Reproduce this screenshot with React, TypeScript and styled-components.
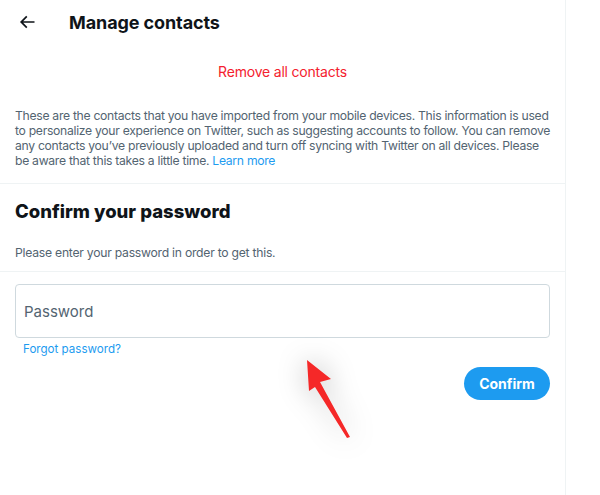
import React from 'react';
import styled, {createGlobalStyle} from "styled-components";

const GlobalStyle = createGlobalStyle`
    html, body {
        margin: 0;
        padding: 0;
        background: #fff;
    }
    body {
        font-family: Inter, "Noto Sans", "Liberation Sans", sans-serif;
        color: #0f1419;
    }
`

function BackArrow() {
    return (
        <svg width="20" height="20" viewBox="0 0 24 24" aria-hidden="true">
            <path
                fill="#0f1419"
                d="M7.414 13l5.043 5.04-1.414 1.42L3.586 12l7.457-7.46 1.414 1.42L7.414 11H21v2H7.414z"
            />
        </svg>
    );
}

function RedArrow() {
    return (
        <ArrowMark width="80" height="110" viewBox="0 0 80 110">
            <path
                fill="#f52828"
                d="M9 2 L33 21 L22 24 L52 79 L49 80 L17 29 L11 33 Z"
            />
        </ArrowMark>
    );
}

const descriptionLines = [
    "These are the contacts that you have imported from your mobile devices. This information is used",
    "to personalize your experience on Twitter, such as suggesting accounts to follow. You can remove",
    "any contacts you’ve previously uploaded and turn off syncing with Twitter on all devices. Please",
];

function App() {
    return (
        <>
            <GlobalStyle/>
            <Page>
                <Column>
                    <Header>
                        <BackButton><BackArrow/></BackButton>
                        <Title>Manage contacts</Title>
                    </Header>
                    <RemoveRow>
                        <DangerLink>Remove all contacts</DangerLink>
                    </RemoveRow>
                    <Description>
                        {descriptionLines.map((line) => (
                            <Line key={line}>{line}</Line>
                        ))}
                        <Line>be aware that this takes a little time. <Link>Learn more</Link></Line>
                    </Description>
                    <Section>
                        <SectionTitle>Confirm your password</SectionTitle>
                        <Hint>Please enter your password in order to get this.</Hint>
                    </Section>
                    <Form>
                        <InputBox>
                            <Placeholder>Password</Placeholder>
                        </InputBox>
                        <SmallLink>Forgot password?</SmallLink>
                        <Actions>
                            <PrimaryButton>Confirm</PrimaryButton>
                        </Actions>
                    </Form>
                    <RedArrow/>
                </Column>
            </Page>
        </>
    );
}

const Page = styled.div`
    display: flex;
    width: 600px;
    height: 495px;
    overflow: hidden;
`
const Column = styled.div`
    position: relative;
    width: 566px;
    min-height: 495px;
    border-right: 1px solid #eff3f4;
    box-sizing: border-box;
    display: flex;
    flex-direction: column;
`
const Header = styled.div`
    display: flex;
    align-items: center;
    height: 44px;
    padding: 0 16px 0 15px;
`
const BackButton = styled.div`
    display: flex;
    align-items: center;
    justify-content: center;
    width: 20px;
    height: 20px;
    margin-left: 2px;
    margin-right: 32px;
`
const Title = styled.h2`
    margin: 0;
    font-size: 18px;
    font-weight: 700;
    color: #0f1419;
    letter-spacing: -0.1px;
`
const RemoveRow = styled.div`
    display: flex;
    justify-content: center;
    padding: 18px 0 12px;
`
const DangerLink = styled.span`
    font-size: 14px;
    line-height: 20px;
    color: #f4212e;
    letter-spacing: -0.2px;
`
const Description = styled.div`
    padding: 14px 15px 15px;
    font-size: 12.2px;
    line-height: 15px;
    color: #536471;
    border-bottom: 1px solid #eff3f4;
`
const Line = styled.div`
    white-space: nowrap;
    letter-spacing: -0.3px;
`
const Link = styled.span`
    color: #1d9bf0;
`
const Section = styled.div`
    padding: 15px 15px 10px;
    border-bottom: 1px solid #eff3f4;
`
const SectionTitle = styled.h3`
    margin: 0;
    font-size: 18.5px;
    line-height: 24px;
    font-weight: 800;
    color: #0f1419;
`
const Hint = styled.div`
    margin-top: 22px;
    font-size: 12.2px;
    line-height: 16px;
    letter-spacing: -0.25px;
    color: #536471;
`
const Form = styled.div`
    display: flex;
    flex-direction: column;
    padding: 12px 15px 0;
`
const InputBox = styled.div`
    display: flex;
    align-items: center;
    height: 54px;
    box-sizing: border-box;
    border: 1px solid #cfd9de;
    border-radius: 4px;
    padding: 0 8px;
`
const Placeholder = styled.span`
    font-size: 15px;
    color: #536471;
`
const SmallLink = styled.span`
    margin-top: 3px;
    padding-left: 8px;
    font-size: 11.6px;
    line-height: 16px;
    color: #1d9bf0;
`
const Actions = styled.div`
    display: flex;
    justify-content: flex-end;
    margin-top: 10px;
`
const PrimaryButton = styled.button`
    height: 33px;
    width: 86px;
    border: none;
    border-radius: 17px;
    background: #1d9bf0;
    color: #fff;
    font-family: Inter, "Noto Sans", sans-serif;
    font-size: 14px;
    font-weight: 700;
    padding: 0;
`
const ArrowMark = styled.svg`
    position: absolute;
    left: 298px;
    top: 358px;
    filter: drop-shadow(0 0 14px rgba(0, 0, 0, 0.3));
`
export default App;
